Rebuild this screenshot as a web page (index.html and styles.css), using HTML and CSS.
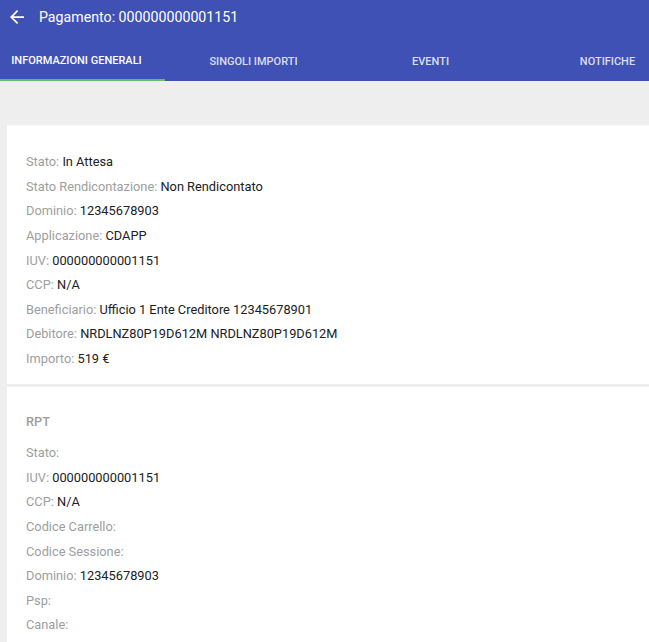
FILE: index.html
```html
<!DOCTYPE html>
<html>
<head>
<meta charset="utf-8">
<link rel="stylesheet" href="styles.css">
</head>
<body>
<div class="page">
  <header class="appbar">
    <div class="titlerow">
      <svg class="back" width="16" height="16" viewBox="0 0 16 16"><path d="M16 7H3.83l5.59-5.59L8 0 0 8l8 8 1.41-1.41L3.83 9H16z" fill="#fff"/></svg>
      <span class="title">Pagamento: 000000000001151</span>
    </div>
    <nav class="tabs">
      <div class="tab active">INFORMAZIONI GENERALI</div>
      <div class="tab">SINGOLI IMPORTI</div>
      <div class="tab">EVENTI</div>
      <div class="tab">NOTIFICHE</div>
    </nav>
  </header>
  <main class="content">
    <section class="card first">
      <div class="row"><span class="lbl">Stato: </span><span class="val">In Attesa</span></div>
      <div class="row"><span class="lbl">Stato Rendicontazione: </span><span class="val">Non Rendicontato</span></div>
      <div class="row"><span class="lbl">Dominio: </span><span class="val">12345678903</span></div>
      <div class="row"><span class="lbl">Applicazione: </span><span class="val">CDAPP</span></div>
      <div class="row"><span class="lbl">IUV: </span><span class="val">000000000001151</span></div>
      <div class="row"><span class="lbl">CCP: </span><span class="val">N/A</span></div>
      <div class="row"><span class="lbl">Beneficiario: </span><span class="val">Ufficio 1 Ente Creditore 12345678901</span></div>
      <div class="row"><span class="lbl">Debitore: </span><span class="val">NRDLNZ80P19D612M NRDLNZ80P19D612M</span></div>
      <div class="row"><span class="lbl">Importo: </span><span class="val">519 €</span></div>
    </section>
    <section class="card second">
      <div class="heading">RPT</div>
      <div class="row"><span class="lbl">Stato: </span></div>
      <div class="row"><span class="lbl">IUV: </span><span class="val">000000000001151</span></div>
      <div class="row"><span class="lbl">CCP: </span><span class="val">N/A</span></div>
      <div class="row"><span class="lbl">Codice Carrello: </span></div>
      <div class="row"><span class="lbl">Codice Sessione: </span></div>
      <div class="row"><span class="lbl">Dominio: </span><span class="val">12345678903</span></div>
      <div class="row"><span class="lbl">Psp: </span></div>
      <div class="row"><span class="lbl">Canale: </span></div>
    </section>
  </main>
</div>
</body>
</html>
```
FILE: styles.css
```css
html, body {
  margin: 0;
  padding: 0;
  background: #eeeeee;
  font-family: Roboto, "Liberation Sans", sans-serif;
  overflow: hidden;
}
.page {
  width: 649px;
  height: 642px;
  overflow: hidden;
}
.appbar {
  background: #3f51b5;
  height: 81px;
  display: flex;
  flex-direction: column;
}
.titlerow {
  height: 40px;
  display: flex;
  align-items: center;
  padding-left: 10px;
  padding-bottom: 6px;
  box-sizing: border-box;
}
.back {
  width: 14px;
  height: 14px;
  margin-right: 15px;
}
.title {
  color: #fff;
  font-size: 14.2px;
}
.tabs {
  display: flex;
  margin-left: -12px;
  height: 41px;
}
.tab {
  flex: 0 0 177px;
  display: flex;
  align-items: center;
  justify-content: center;
  font-size: 11px;
  font-weight: 500;
  color: rgba(255,255,255,0.82);
  padding-top: 2px;
  box-sizing: border-box;
}
.tab.active {
  color: #fff;
  border-bottom: 2px solid #66bb6a;
}
.content {
  padding: 44px 0 0 7px;
}
.card {
  background: #fff;
  padding-left: 19px;
}
.card.first {
  padding-top: 25px;
  height: 259px;
  box-sizing: border-box;
}
.card.second {
  margin-top: 3px;
  padding-top: 23px;
  height: 300px;
}
.row, .heading {
  height: 24.65px;
  font-size: 12.8px;
  line-height: 24.65px;
  white-space: nowrap;
}
.heading {
  color: #9e9e9e;
  font-weight: 500;
  height: 31px;
  line-height: 24px;
}
.lbl {
  color: #9e9e9e;
}
.val {
  color: #212121;
}
```
